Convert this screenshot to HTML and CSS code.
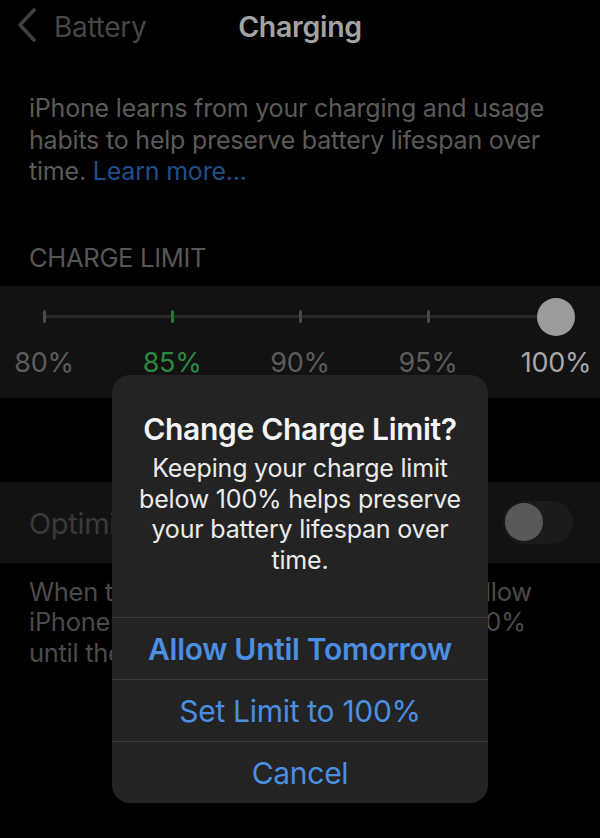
FILE: index.html
```html
<!DOCTYPE html>
<html lang="en">
<head>
<meta charset="utf-8">
<title>Charging</title>
<link rel="stylesheet" href="styles.css">
</head>
<body>
<div class="screen">
  <header class="nav">
    <div class="back">
      <svg class="chev" width="20" height="34" viewBox="0 0 20 34"><polyline points="17,2 3,17 17,32" fill="none" stroke="#3f3f3f" stroke-width="3.6" stroke-linecap="round" stroke-linejoin="round"/></svg>
      <span class="back-label">Battery</span>
    </div>
    <div class="nav-title">Charging</div>
    <div></div>
  </header>

  <p class="intro">iPhone learns from your charging and usage habits to help preserve battery lifespan over time. <span class="link">Learn more...</span></p>

  <div class="section-head">CHARGE LIMIT</div>

  <section class="band slider-band">
    <div class="slider">
      <span class="tick"></span>
      <span class="tick green"></span>
      <span class="tick"></span>
      <span class="tick"></span>
      <span class="knob-cell"><span class="knob"></span></span>
    </div>
    <div class="labels">
      <span class="lbl">80%</span>
      <span class="lbl green">85%</span>
      <span class="lbl">90%</span>
      <span class="lbl">95%</span>
      <span class="lbl on">100%</span>
    </div>
  </section>

  <section class="band toggle-band">
    <span class="row-label">Optimized Battery Charging</span>
    <span class="toggle"><span class="toggle-knob"></span></span>
  </section>

  <div class="footer-text">
    <div class="fl">When the charge limit is set to 100%, allow</div>
    <div class="fl">iPhone to wait to finish charging past 80%</div>
    <div class="fl">until the time you need to use it.</div>
  </div>

  <div class="alert">
    <div class="alert-body">
      <div class="alert-title">Change Charge Limit?</div>
      <div class="alert-msg">Keeping your charge limit<br>below 100% helps preserve<br>your battery lifespan over<br>time.</div>
    </div>
    <div class="alert-btn bold">Allow Until Tomorrow</div>
    <div class="alert-btn">Set Limit to 100%</div>
    <div class="alert-btn">Cancel</div>
  </div>
</div>
</body>
</html>
```

FILE: styles.css
```css
html, body {
  margin: 0;
  padding: 0;
  background: #000;
}
body {
  width: 600px;
  height: 838px;
  overflow: hidden;
  font-family: Inter, "Noto Sans", sans-serif;
}
.screen {
  position: relative;
  width: 600px;
  height: 838px;
  overflow: hidden;
}
.nav {
  display: grid;
  grid-template-columns: 1fr auto 1fr;
  align-items: center;
  height: 54px;
  line-height: 54px;
}
.back {
  display: flex;
  align-items: center;
  padding-left: 17px;
}
.chev {
  margin-top: -4px;
}
.back-label {
  margin-left: 17px;
  font-size: 28px;
  color: #464646;
  letter-spacing: -0.3px;
}
.nav-title {
  font-size: 28.5px;
  font-weight: 600;
  color: #a3a3a3;
  letter-spacing: -0.3px;
}
.intro {
  margin: 39px 0 0;
  padding: 0 29px;
  font-size: 25px;
  line-height: 31.5px;
  color: #5b5b5b;
  letter-spacing: -0.2px;
}
.link {
  color: #1f4f8b;
}
.section-head {
  margin-top: 55px;
  padding-left: 29px;
  font-size: 25.5px;
  line-height: 30px;
  color: #575757;
  letter-spacing: -0.3px;
}
.band {
  background: #121212;
}
.slider-band {
  margin-top: 13px;
  height: 112px;
}
.slider, .labels {
  display: grid;
  grid-template-columns: repeat(5, 128px);
  justify-content: center;
  justify-items: center;
  align-items: center;
}
.slider {
  height: 62px;
  background: linear-gradient(#2a2a2a, #2a2a2a) no-repeat center / 512px 3px;
}
.tick {
  width: 3px;
  height: 13px;
  border-radius: 1.5px;
  background: #4a4a4a;
}
.tick.green {
  background: #1f7b35;
}
.knob-cell {
  display: flex;
}
.knob {
  width: 38px;
  height: 38px;
  border-radius: 50%;
  background: #9c9c9c;
}
.labels {
  height: 30px;
  line-height: 30px;
}
.lbl {
  font-size: 27px;
  color: #5c5c5c;
  letter-spacing: -0.3px;
}
.lbl.green {
  color: #2b8a40;
}
.lbl.on {
  color: #a8a8a8;
}
.toggle-band {
  margin-top: 84px;
  height: 81px;
  display: flex;
  align-items: center;
  justify-content: space-between;
  padding: 0 27px 0 29px;
}
.row-label {
  font-size: 29px;
  color: #3a3a3a;
  letter-spacing: -0.3px;
  margin-top: 2px;
}
.toggle {
  width: 70px;
  height: 43px;
  border-radius: 22px;
  background: #1b1b1b;
  display: flex;
  align-items: center;
  padding: 0 2px;
  box-sizing: border-box;
}
.toggle-knob {
  width: 38px;
  height: 38px;
  border-radius: 50%;
  background: #595959;
}
.footer-text {
  margin-top: 14px;
  padding-left: 29px;
  font-size: 25.5px;
  line-height: 30.5px;
  color: #4b4b4b;
  letter-spacing: -0.3px;
}
.fl {
  white-space: nowrap;
}
.alert {
  position: absolute;
  left: 112px;
  top: 375px;
  width: 376px;
  border-radius: 18px;
  background: #232323;
  overflow: hidden;
}
.alert-body {
  padding: 37px 8px 0;
  text-align: center;
  height: 242px;
  box-sizing: border-box;
}
.alert-title {
  font-size: 30px;
  line-height: 34px;
  font-weight: 600;
  color: #f4f4f4;
  letter-spacing: -0.3px;
}
.alert-msg {
  margin-top: 7px;
  font-size: 25px;
  line-height: 30.5px;
  color: #ebebeb;
  letter-spacing: -0.2px;
}
.alert-btn {
  height: 62px;
  box-sizing: border-box;
  border-top: 1px solid #3a3a3a;
  display: flex;
  align-items: center;
  justify-content: center;
  font-size: 30px;
  color: #4b8ee2;
  letter-spacing: -0.3px;
}
.alert-btn.bold {
  font-weight: 600;
}
```
